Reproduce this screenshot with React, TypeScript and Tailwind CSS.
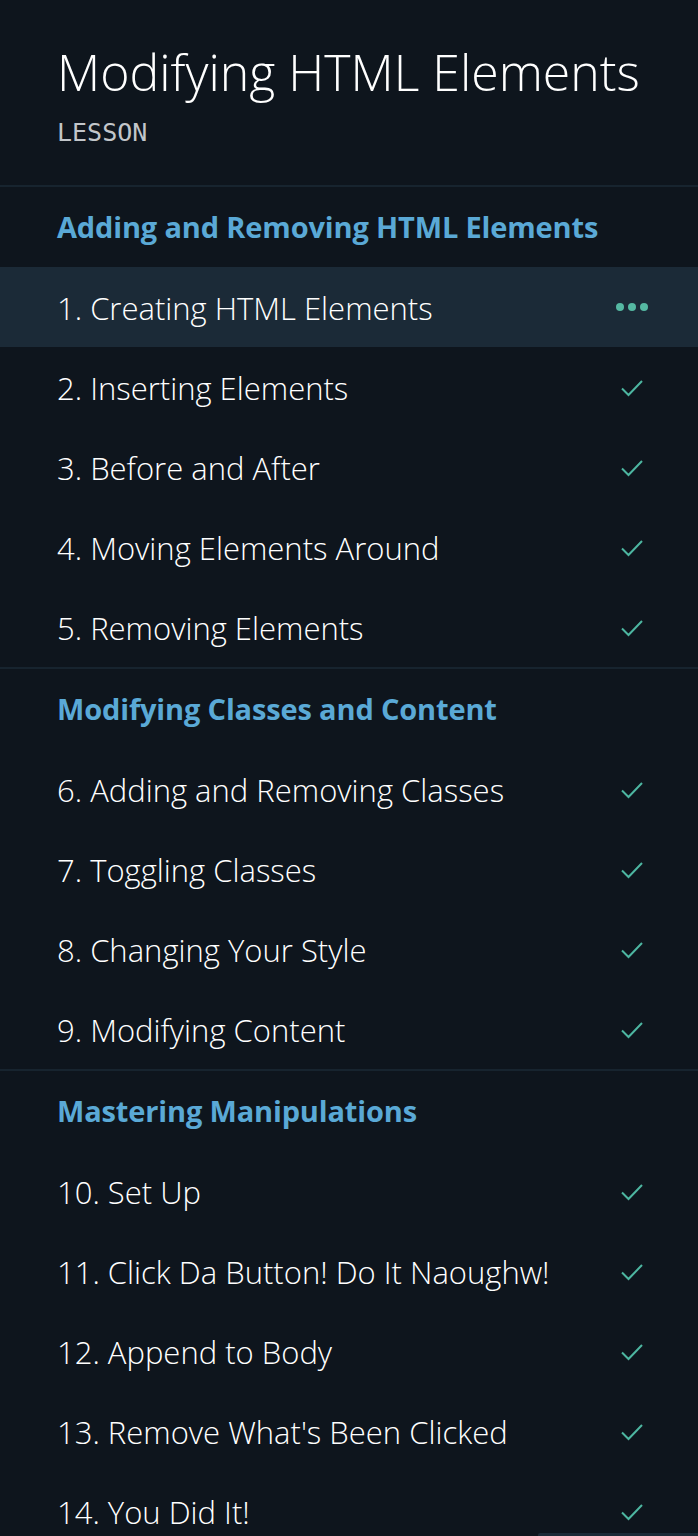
import React from 'react';

type Lesson = { title: string; status: 'active' | 'done' };
type Section = { heading: string; lessons: Lesson[] };

const sections: Section[] = [
  {
    heading: 'Adding and Removing HTML Elements',
    lessons: [
      { title: '1. Creating HTML Elements', status: 'active' },
      { title: '2. Inserting Elements', status: 'done' },
      { title: '3. Before and After', status: 'done' },
      { title: '4. Moving Elements Around', status: 'done' },
      { title: '5. Removing Elements', status: 'done' },
    ],
  },
  {
    heading: 'Modifying Classes and Content',
    lessons: [
      { title: '6. Adding and Removing Classes', status: 'done' },
      { title: '7. Toggling Classes', status: 'done' },
      { title: '8. Changing Your Style', status: 'done' },
      { title: '9. Modifying Content', status: 'done' },
    ],
  },
  {
    heading: 'Mastering Manipulations',
    lessons: [
      { title: '10. Set Up', status: 'done' },
      { title: '11. Click Da Button! Do It Naoughw!', status: 'done' },
      { title: '12. Append to Body', status: 'done' },
      { title: "13. Remove What's Been Clicked", status: 'done' },
      { title: '14. You Did It!', status: 'done' },
    ],
  },
];

const Check = () => (
  <svg width="24" height="20" viewBox="0 0 24 20" fill="none">
    <path d="M2 10.5 L8.5 17 L22 3" stroke="#4db6a1" strokeWidth="2" />
  </svg>
);

const Dots = () => (
  <div className="flex gap-[4px]">
    <span className="w-[8px] h-[8px] rounded-full bg-[#55b8a2]" />
    <span className="w-[8px] h-[8px] rounded-full bg-[#55b8a2]" />
    <span className="w-[8px] h-[8px] rounded-full bg-[#55b8a2]" />
  </div>
);

export default function App() {
  return (
    <div className="relative min-h-screen w-full bg-[#0e151d] text-white font-['Open_Sans',sans-serif] overflow-hidden">
      {/* Header */}
      <header className="px-[57px] pt-[40px] h-[187px] border-b-2 border-[#17242f]">
        <h1 className="text-[50px] leading-[64px] font-light whitespace-nowrap">Modifying HTML Elements</h1>
        <p className="mt-[14px] text-[25px] leading-[30px] text-[#c2c6ca] font-['DejaVu_Sans_Mono',monospace]">
          LESSON
        </p>
      </header>

      {sections.map((section, i) => (
        <section key={section.heading} className={i > 0 ? 'border-t-2 border-[#17242f]' : ''}>
          <h2 className="h-[80px] flex items-center px-[57px] text-[29px] font-bold text-[#5aa9d6] tracking-[-0.15px]">
            {section.heading}
          </h2>
          {section.lessons.map((lesson) => (
            <div
              key={lesson.title}
              className={`h-[80px] flex items-center justify-between pl-[57px] pr-[50px] ${
                lesson.status === 'active' ? 'bg-[#1b2a37]' : ''
              }`}
            >
              <span className="pt-[3px] text-[31px] font-light text-white whitespace-nowrap">{lesson.title}</span>
              {lesson.status === 'active' ? <Dots /> : <div className="pr-[4px] pt-[2px]"><Check /></div>}
            </div>
          ))}
        </section>
      ))}

      {/* bottom-right floating button, mostly cut off */}
      <div className="absolute right-0 top-[1533px] w-[160px] h-[40px] rounded-tl-[2px] bg-[#1b2a37]" />
    </div>
  );
}
